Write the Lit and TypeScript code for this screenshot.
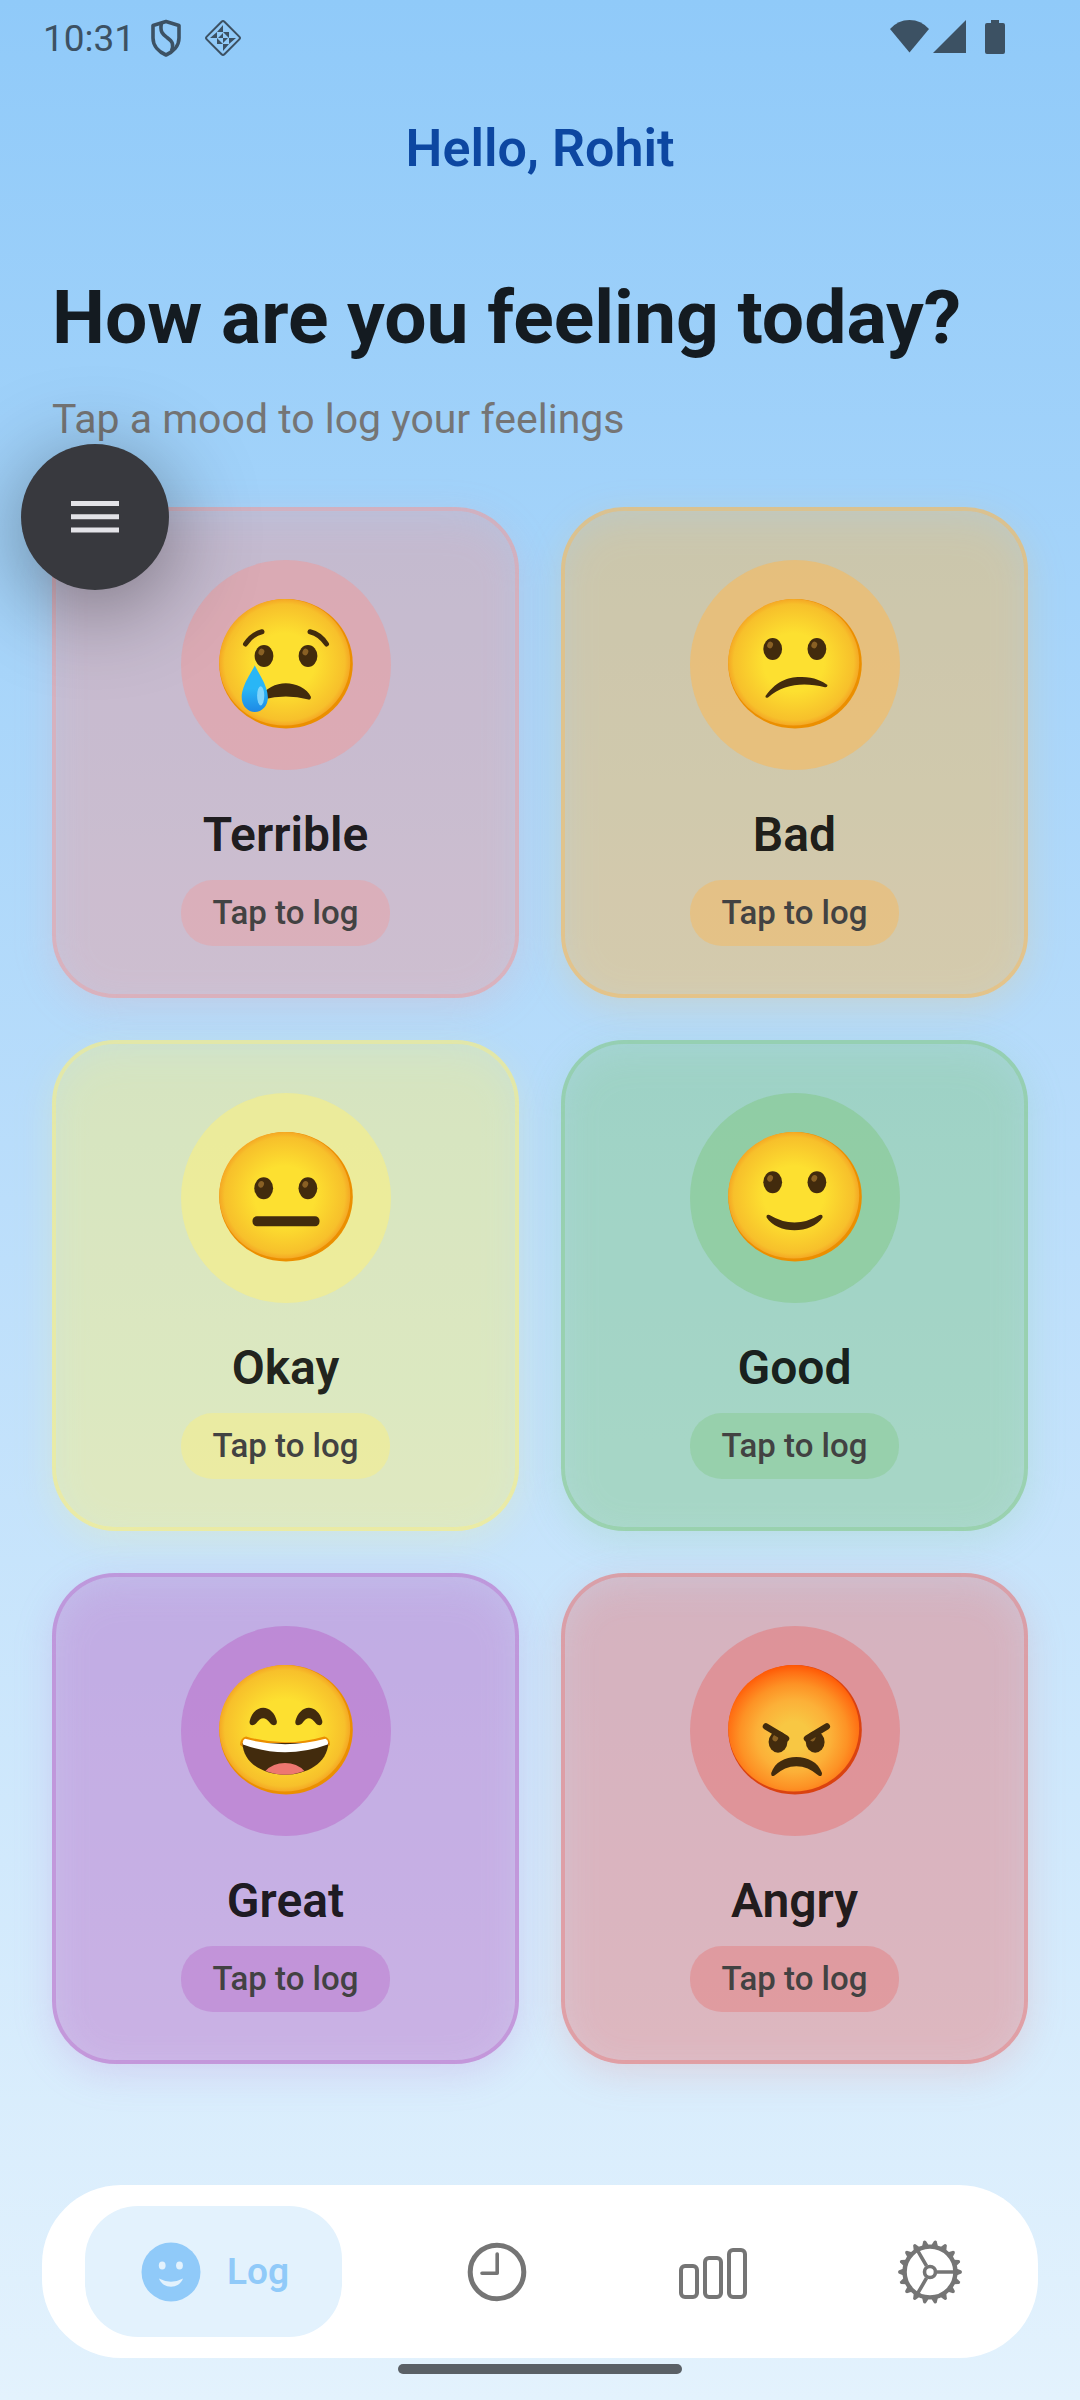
import { LitElement, html, svg, css } from "lit";
import { customElement, property, state } from "lit/decorators.js";

interface Mood {
  name: string;
  color: string;
}

const MOODS: Mood[] = [
  { name: "Terrible", color: "239 154 154" },
  { name: "Bad", color: "255 183 77" },
  { name: "Okay", color: "255 241 118" },
  { name: "Good", color: "129 199 132" },
  { name: "Great", color: "186 104 200" },
  { name: "Angry", color: "229 115 115" },
];

const eye = (cx: number, cy: number, ry = 11) => svg`
  <ellipse cx=${cx} cy=${cy} rx="9.4" ry=${ry} fill="#422b0d"/>
  <ellipse cx=${cx - 2.6} cy=${cy - 4} rx="2.8" ry="3.4" fill="#896024" transform="rotate(25 ${cx - 2.6} ${cy - 4})"/>`;

const FEATURES: Record<string, unknown> = {
  Terrible: svg`
    ${eye(45, 57)}${eye(89, 57)}
    <path d="M26.5 45Q33 35 43 32.7M107.5 45Q101 35 91 32.7" fill="none" stroke="#422b0d" stroke-width="5" stroke-linecap="round"/>
    <path d="M41.5 99C46 89 57 84.2 66.8 84.2S88 89 92 98Q92 101 89.5 100.6Q67 94.5 44 100.6Q41.5 101 41.5 99Z" fill="#422b0d"/>
    <path d="M35.8 66.2C38 72 48.9 86 48.9 98.5A13.1 14.6 0 0 1 22.7 98.5C22.7 86 33.5 72 35.8 66.2Z" fill="url(#tear)"/>
    <ellipse cx="41.7" cy="96.8" rx="3.6" ry="9.6" fill="#81d4fa"/>`,
  Bad: svg`
    ${eye(44.7, 50)}${eye(88.9, 50)}
    <path d="M37.5 97C50 80 62 78 74 78C86 78 95 82.5 99.5 86Q99.5 88.5 97 88.2C75 83 56 85 40 98.5Q37 99.5 37.5 97Z" fill="#422b0d"/>`,
  Okay: svg`
    ${eye(44.7, 56.3)}${eye(88.9, 56.3)}
    <rect x="33.5" y="84.3" width="67" height="10" rx="4.5" fill="#422b0d"/>`,
  Good: svg`
    ${eye(44.7, 50.3)}${eye(88.9, 50.3)}
    <path d="M41.5 83Q66.5 98 91.5 83Q95 82 94.5 85.5C89 94 78 98.3 66.5 98.3S44 94 38.6 85.5Q38 82 41.5 83Z" fill="#422b0d"/>`,
  Great: svg`
    <path d="M30.7 56C32.500 48 38 42.700 44.200 42.700S56 48 57.800 56C58.500 60.500 54 61.500 51.500 58.500Q47.500 53.300 44.200 53.300T37 58.500C34 61.500 29.800 60.500 30.700 56Z" fill="#422b0d"/>
    <path d="M76.4 56C78.500 48 84 42.700 89.800 42.700S101.500 48 103.300 56C104 60.500 99.500 61.500 97 58.500Q93 53.300 89.800 53.300T83 58.500C79.500 61.500 75.500 60.500 76.400 56Z" fill="#422b0d"/>
    <path d="M27 71.5Q66 83 105.500 71.500Q111 72.500 111 80L107 83H25L21 80Q21.500 72.500 27 71.500Z" fill="#eb8f00"/>
    <path d="M23.5 78C24 98 44 109.700 66 109.700S108.500 98 109.300 78Z" fill="#422b0d"/>
    <path d="M46.4 106Q54 98 66 98T85.400 106Q76 109.700 66 109.700T46.400 106Z" fill="#ed7770"/>
    <path d="M26 73.800Q66 84.500 106.500 73.800Q110 75.500 108.700 79.500Q66 95 24 79.500Q23 75.500 26 73.800Z" fill="#fff"/>`,
  Angry: svg`
    ${eye(50, 77, 10.7)}${eye(87.2, 77, 10.7)}
    <path d="M38 61.5L58 73.5M98.8 61.5L79 73.5" stroke="#422b0d" stroke-width="6.5" stroke-linecap="round"/>
    <path d="M43.2 108C47 97 57 92 68.4 92S90 97 94 108Q94 112.5 90.5 110.5Q80 101.2 68.4 101.2T46.5 110.5Q43 112.5 43.2 108Z" fill="#422b0d"/>`,
};

@customElement("mood-face")
export class MoodFace extends LitElement {
  @property() name = "Okay";

  static styles = css`
    :host { display: block; }
    svg { display: block; width: 134px; height: 132px; }
  `;

  render() {
    const angry = this.name === "Angry";
    return html`<svg viewBox="0 0 134 132" aria-hidden="true">
      <defs>
        <radialGradient id="skin" cx=".5" cy=".5" r=".51">
          <stop offset=".45" stop-color="#fde030"/>
          <stop offset=".9" stop-color="#f7c02b"/>
          <stop offset="1" stop-color="#f4a223"/>
        </radialGradient>
        <radialGradient id="rage" cx=".5" cy=".56" r=".57">
          <stop offset=".2" stop-color="#f8c743"/>
          <stop offset=".5" stop-color="#fcb038"/>
          <stop offset=".72" stop-color="#fd9225"/>
          <stop offset=".88" stop-color="#ff7014"/>
          <stop offset="1" stop-color="#ff5200"/>
        </radialGradient>
        <linearGradient id="tear" x1="0" y1="0" x2="0" y2="1">
          <stop offset=".5" stop-color="#29b6f6"/>
          <stop offset="1" stop-color="#1e88e5"/>
        </linearGradient>
      </defs>
      <ellipse cx="67" cy="64.7" rx="66.8" ry="64.7" fill=${angry ? "#da4210" : "#eb8f00"}/>
      <ellipse cx="65.7" cy="63.3" rx="65.5" ry="63.3" fill=${angry ? "url(#rage)" : "url(#skin)"}/>
      ${FEATURES[this.name]}
    </svg>`;
  }
}

@customElement("mood-card")
export class MoodCard extends LitElement {
  @property() name = "";

  static styles = css`
    :host { display: grid; }
    .card {
      position: relative;
      isolation: isolate;
      box-sizing: border-box;
      display: flex;
      flex-direction: column;
      align-items: center;
      min-width: 0;
      padding: 49px 0 48px;
      border: 4px solid rgb(var(--mood) / 0.4);
      border-radius: 63px;
      background: rgb(var(--mood) / 0.3);
      font: inherit;
      cursor: pointer;
    }
    .card::before {
      content: "";
      position: absolute;
      z-index: -1;
      inset: 6px -4px -14px;
      border-radius: 63px;
      background: rgb(var(--mood) / 0.2);
      filter: blur(18px);
    }
    .disc {
      display: grid;
      place-items: center;
      width: 210px;
      height: 210px;
      border-radius: 50%;
      background: rgb(var(--mood) / 0.5);
    }
    .name {
      margin-top: 36px;
      color: rgb(0 0 0 / 0.87);
      font-size: 48px;
      font-weight: 600;
      line-height: 58px;
    }
    .hint {
      margin-top: 16px;
      padding: 0 32px;
      border-radius: 32px;
      background: rgb(var(--mood) / 0.4);
      color: #424242;
      font-size: 33px;
      font-weight: 500;
      line-height: 66px;
    }
  `;

  render() {
    return html`<button class="card" type="button">
      <span class="disc"><mood-face name=${this.name}></mood-face></span>
      <span class="name">${this.name}</span>
      <span class="hint">Tap to log</span>
    </button>`;
  }
}

const TEETH = Array.from({ length: 18 }, (_, i) => i * 20);

const NAV = [
  {
    label: "Log",
    icon: svg`<svg viewBox="0 0 60 60"><circle cx="30" cy="30" r="29.5" fill="currentColor"/>
      <ellipse cx="21.2" cy="23.5" rx="3.4" ry="4" fill="#e3f2fd"/><ellipse cx="38.5" cy="23.5" rx="3.4" ry="4" fill="#e3f2fd"/>
      <path d="M18 36.5Q30 43 42 36.5C40 42 35 44.7 30 44.7S20 42 18 36.5Z" fill="#e3f2fd"/></svg>`,
  },
  {
    label: "History",
    icon: svg`<svg viewBox="0 0 60 60" fill="none" stroke="currentColor"><circle cx="30" cy="30" r="26.8" stroke-width="5"/>
      <path d="M30.2 12V31.2H15" stroke-width="3.6" stroke-linecap="round" stroke-linejoin="round"/></svg>`,
  },
  {
    label: "Statistics",
    icon: svg`<svg viewBox="5 0 60 60" fill="none" stroke="currentColor" stroke-width="4">
      <rect x="3" y="24" width="16" height="31" rx="4"/><rect x="27" y="16" width="16" height="39" rx="4"/><rect x="51" y="8" width="16" height="47" rx="4"/></svg>`,
  },
  {
    label: "Settings",
    icon: svg`<svg viewBox="-30 -30 60 60" fill="none" stroke="currentColor">
      <circle r="25.4" stroke-width="4.4"/><circle r="5.5" stroke-width="3.6"/>
      <path d="M7 0H25M-3.5 -6.1L-12.5 -21.7M-3.5 6.1L-12.5 21.7" stroke-width="3.6"/>
      ${TEETH.map((a) => svg`<path d="M26.5 -3.4L31.3 -1.4Q32.8 0 31.300 1.4L26.5 3.4Z" fill="currentColor" stroke="none" transform="rotate(${a})"/>`)}</svg>`,
  },
];

@customElement("app-root")
export class AppRoot extends LitElement {
  @state() private active = "Log";

  static styles = css`
    :host { display: block; }
    .screen {
      position: relative;
      box-sizing: border-box;
      display: flex;
      flex-direction: column;
      min-height: 100vh;
      background: linear-gradient(#90caf9, #bbdefb 50%, #e3f2fd);
      color: rgb(0 0 0 / 0.87);
      font-family: Roboto, "Liberation Sans", sans-serif;
    }
    .status {
      display: flex;
      justify-content: space-between;
      align-items: center;
      height: 76px;
      padding: 0 75px 0 43px;
      color: #3c5163;
      font-size: 37px;
    }
    .status-group { display: flex; align-items: center; }
    .status svg { display: block; height: 38px; fill: currentColor; }
    .shield { width: 30px; margin-left: 16px; }
    .diamond { width: 38px; margin-left: 23px; }
    .wifi { width: 39px; }
    .signal { width: 33px; margin-left: 4px; }
    .battery { width: 20px; margin-left: 19px; }
    .greeting {
      margin: 0;
      color: #0d47a1;
      font-size: 52px;
      font-weight: 600;
      line-height: 64px;
      text-align: center;
      padding: 41px 52px 0;
    }
    .prompt { padding: 92px 52px 64px; }
    .question { margin: 0; font-size: 75px; font-weight: 700; line-height: 88px; }
    .lead { margin: 34px 0 0; color: #757575; font-size: 41px; line-height: 48px; }
    .moods {
      display: grid;
      grid-template-columns: 1fr 1fr;
      gap: 42px;
      padding: 0 52px;
    }
    .menu {
      position: absolute;
      top: 444px;
      left: 21px;
      display: grid;
      place-items: center;
      width: 148px;
      height: 146px;
      padding: 0;
      border: 0;
      border-radius: 50%;
      background: #38393e;
      color: #e3e3e8;
      box-shadow: 0 16px 92px rgb(0 0 0 / 0.42);
    }
    .menu svg { width: 48px; height: 32px; fill: currentColor; }
    .nav {
      box-sizing: border-box;
      display: flex;
      justify-content: space-between;
      align-items: center;
      margin: auto 42px 0;
      padding: 21px 46px 21px 43px;
      border-radius: 79px;
      background: #fff;
    }
    .tab {
      display: flex;
      align-items: center;
      gap: 28px;
      height: 131px;
      padding: 0 32px;
      border: 0;
      border-radius: 53px;
      background: none;
      color: #757575;
      font: 600 37px/44px Roboto, "Liberation Sans", sans-serif;
      cursor: pointer;
    }
    .tab.active { gap: 26px; padding: 0 53px 0 56px; background: #e3f2fd; color: #90caf9; }
    .tab svg { display: block; width: 60px; height: 60px; overflow: visible; }
    .home {
      align-self: center;
      width: 284px;
      height: 10px;
      margin: 6px 0 26px;
      border-radius: 5px;
      background: #5a6066;
    }
  `;

  render() {
    return html`<div class="screen">
      <div class="status">
        <div class="status-group">
          <span>10:31</span>
          <svg class="shield" viewBox="0 0 30 38" aria-hidden="true">
            <path d="M15 2.500L28 6.500V19C28 27 22 33 15 36C8 33 2 27 2 19V6.500Z" fill="none" stroke="currentColor" stroke-width="3.600" stroke-linejoin="round"/>
            <path d="M10.500 4C8.500 13 12 15.500 16 18.500C21.500 22.500 23 25 20.500 32" fill="none" stroke="currentColor" stroke-width="3.600"/>
          </svg>
          <svg class="diamond" viewBox="-19 -19 38 38" aria-hidden="true">
            <rect x="-12.500" y="-12.500" width="25" height="25" rx="2" fill="none" stroke="currentColor" stroke-width="2" transform="rotate(45)"/>
            <path d="M0 -13V-6H-6ZM-13 0H-6V-6ZM13 0H6V6ZM0 13V6H6ZM0 -6H6V0ZM-6 0V6H0ZM-5 0L0 -5V0ZM0 0H5L0 5Z"/>
          </svg>
        </div>
        <div class="status-group">
          <svg class="wifi" viewBox="0 0 39 38" aria-hidden="true"><path d="M0 10Q8 1 19.500 1T39 10L19.500 33.500Z"/></svg>
          <svg class="signal" viewBox="0 0 33 38" aria-hidden="true"><path d="M33 1V34H0Z"/></svg>
          <svg class="battery" viewBox="0 0 20 38" aria-hidden="true"><path d="M6 1H14V4H18Q20 4 20 6V33Q20 35 18 35H2Q0 35 0 33V6Q0 4 2 4H6Z"/></svg>
        </div>
      </div>
      <p class="greeting">Hello, Rohit</p>
      <div class="prompt">
        <h1 class="question">How are you feeling today?</h1>
        <p class="lead">Tap a mood to log your feelings</p>
      </div>
      <main class="moods">
        ${MOODS.map((m) => html`<mood-card name=${m.name} style="--mood: ${m.color}"></mood-card>`)}
      </main>
      <nav class="nav">
        ${NAV.map((n) => html`<button type="button" class="tab ${this.active === n.label ? "active" : ""}"
          aria-label=${n.label} @click=${() => (this.active = n.label)}>
          ${n.icon}${this.active === n.label ? html`<span>${n.label}</span>` : ""}
        </button>`)}
      </nav>
      <div class="home"></div>
      <button class="menu" type="button" aria-label="Menu">
        <svg viewBox="0 0 48 32" aria-hidden="true"><path d="M0 0H48V5H0ZM0 13.300H48V18.300H0ZM0 26.600H48V31.600H0Z"/></svg>
      </button>
    </div>`;
  }
}
